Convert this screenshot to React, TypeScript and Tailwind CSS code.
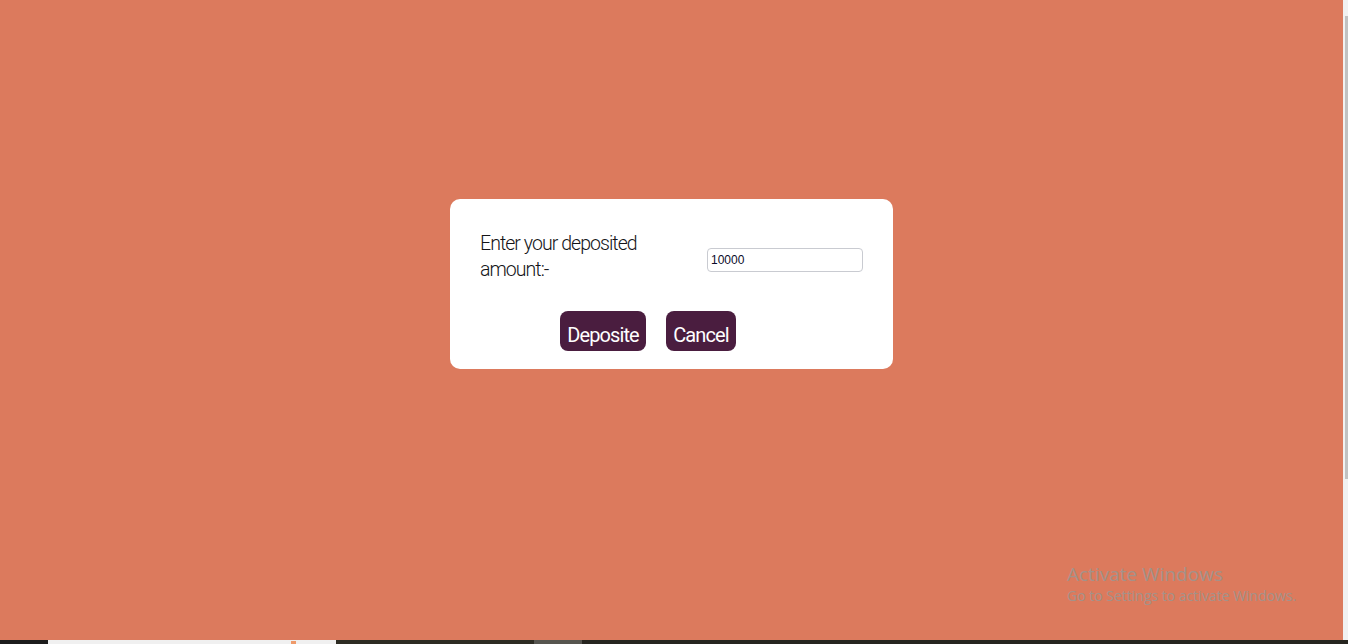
import React from "react";

const dosisLike = '"Roboto", "Noto Sans", sans-serif';

export default function App() {
  return (
    <div className="relative flex h-[644px] w-[1348px] flex-col overflow-hidden">
      <div className="flex h-[640px] w-full">
        <main className="relative flex h-full w-[1343px] flex-col items-center bg-[#dc7a5d] pt-[199px]">
          <div className="flex h-[170px] w-[443px] flex-col rounded-[10px] bg-white px-[30px] pt-[32px]">
            <div className="flex items-start justify-between">
              <div
                className="w-[190px] text-[19.5px] font-light leading-[26px] tracking-[-0.95px] text-[#141418]"
                style={{ fontFamily: dosisLike }}
              >
                Enter your deposited amount:-
              </div>
              <input
                defaultValue="10000"
                className="mt-[17px] h-[24px] w-[156px] rounded-[4px] border border-[#c9cbd1] px-[3px] text-[12px] text-[#0b0b2a] outline-none"
                style={{ fontFamily: '"Liberation Sans", Arial, sans-serif' }}
              />
            </div>
            <div className="mt-[28px] flex gap-[20px] pl-[80px]">
              <button
                className="flex h-[40px] w-[86px] items-end justify-center rounded-[8px] bg-[#4a1d3f] pb-[3px] text-[20px] font-normal leading-[26px] tracking-[-0.9px] text-white"
                style={{ fontFamily: dosisLike }}
              >
                Deposite
              </button>
              <button
                className="flex h-[40px] w-[70px] items-end justify-center rounded-[8px] bg-[#4a1d3f] pb-[3px] text-[20px] font-normal leading-[26px] tracking-[-0.9px] text-white"
                style={{ fontFamily: dosisLike }}
              >
                Cancel
              </button>
            </div>
          </div>
          <div
            className="absolute left-[1067px] top-[562px] text-[#a3928a]"
            style={{ fontFamily: '"Open Sans", "Noto Sans", sans-serif' }}
          >
            <div className="text-[19px] leading-[24px]">Activate Windows</div>
            <div className="text-[14px] leading-[20px]">Go to Settings to activate Windows.</div>
          </div>
        </main>
        <div className="relative h-full w-[5px] bg-[#f1f1f1]">
          <div className="absolute left-[2px] top-[16px] h-[463px] w-[3px] bg-[#c1c1c1]" />
        </div>
      </div>
      <div className="flex h-[4px] w-full bg-[#26251f]">
        <div className="h-full w-[48px] bg-[#1c1c1c]" />
        <div className="relative h-full w-[288px] bg-[#f0f0f0]">
          <div className="absolute left-[243px] top-[1px] h-[3px] w-[5px] bg-[#ef9a6a]" />
        </div>
        <div className="h-full w-[198px] bg-[#2d2b22]" />
        <div className="h-full w-[48px] bg-[#56554f]" />
        <div className="h-full flex-1 bg-[#26251f]" />
      </div>
    </div>
  );
}
